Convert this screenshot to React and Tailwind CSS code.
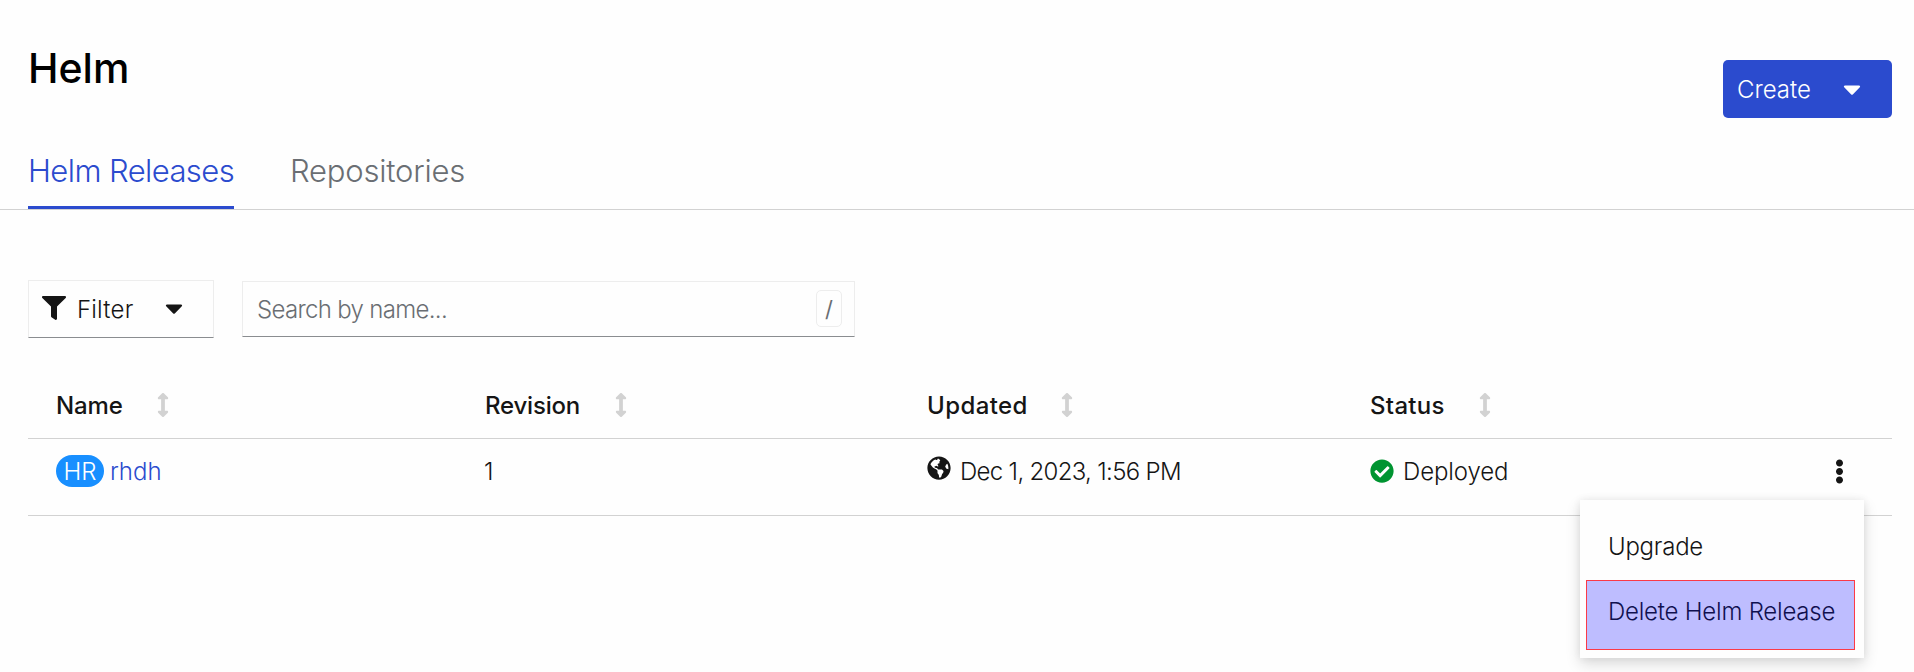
import React from "react";
import {
  FaArrowsAltV,
  FaCaretDown,
  FaCheckCircle,
  FaEllipsisV,
  FaFilter,
  FaGlobeAmericas,
} from "react-icons/fa";

const columns = [
  { label: "Name", cell: "w-[457px] pl-7", text: "tracking-[-0.1px]", gap: "ml-[28px]" },
  { label: "Revision", cell: "w-[442px]", text: "tracking-[-0.2px]", gap: "ml-[29px]" },
  { label: "Updated", cell: "w-[443px]", text: "tracking-[0.4px]", gap: "ml-[27px]" },
  { label: "Status", cell: "flex-1", text: "tracking-[0.3px]", gap: "ml-[28px]" },
];

function Tabs() {
  return (
    <nav className="mt-[33px] flex gap-14 border-b border-[#d2d2d2] px-7 text-[31px] leading-10">
      <a className="h-[58px] w-[206px] border-b-3 border-[#2b4bce] whitespace-nowrap tracking-[-0.58px] text-[#2b4bce]">
        Helm Releases
      </a>
      <a className="tracking-[-0.2px] text-[#6a6e73]">Repositories</a>
    </nav>
  );
}

function Toolbar() {
  return (
    <div className="mt-[70px] flex items-center gap-7 px-7">
      <button className="flex h-[58px] w-[186px] items-center border border-[#ededed] border-b-[#8a8d90] pl-[13px]">
        <FaFilter className="-mt-[2px] size-6" />
        <span className="ml-[11px] w-[83px] pt-0.5 text-left tracking-[0.2px]">Filter</span>
        <FaCaretDown className="-mt-[2px] size-7" />
      </button>
      <div className="flex h-[56px] w-[613px] items-center justify-between border border-[#ededed] border-b-[#8a8d90] pr-3 pl-[14px] text-[#6a6e73]">
        <span className="pt-0.5 tracking-[-0.68px]">Search by name...</span>
        <kbd className="-mt-px flex h-[37px] w-[26px] items-center justify-center rounded-[5px] border border-[#ededed] font-[Inter] text-[22px] font-normal">
          /
        </kbd>
      </div>
    </div>
  );
}

function ActionMenu() {
  return (
    <div className="absolute top-[61px] right-7 flex h-[158px] w-[284px] flex-col bg-[#fefefe] pt-[28px] leading-[38px] shadow-[0_6px_14px_rgba(3,3,3,0.14),0_0_8px_rgba(3,3,3,0.07)]">
      <div className="h-[52px] pl-7 tracking-[-0.25px]">Upgrade</div>
      <div className="ml-[6px] h-[70px] w-[269px] border border-[#fb3a47] bg-[#bebdff] pt-[12px] pl-[21px] tracking-[-0.22px] whitespace-nowrap text-[#10104f]">
        Delete Helm Release
      </div>
    </div>
  );
}

function ReleasesTable() {
  return (
    <div className="mt-[50px] mr-[22px] ml-7">
      <div className="flex h-[51px] border-b border-[#d2d2d2] font-medium">
        {columns.map((c) => (
          <div key={c.label} className={`flex h-[34px] items-center ${c.cell}`}>
            <span className={`pt-0.5 ${c.text}`}>{c.label}</span>
            <FaArrowsAltV className={`size-6 text-[#d2d2d2] ${c.gap}`} />
          </div>
        ))}
      </div>
      <div className="relative flex h-[77px] border-b border-[#d2d2d2] pt-[14px]">
        <div className="flex h-9 w-[457px] items-center pl-7">
          <span className="flex h-8 w-12 items-center justify-center rounded-full bg-[#188fff] pt-0.5 text-white">
            HR
          </span>
          <a className="ml-[6px] pt-0.5 text-[#2b4bce]">rhdh</a>
        </div>
        <div className="w-[442px] -ml-px leading-[38px]">1</div>
        <div className="ml-px flex h-9 w-[443px] items-center">
          <FaGlobeAmericas className="-mt-[6px] size-6" />
          <span className="ml-[9px] pt-0.5 tracking-[-0.68px]">Dec 1, 2023, 1:56 PM</span>
        </div>
        <div className="flex h-9 flex-1 items-center">
          <FaCheckCircle className="size-6 text-[#009431]" />
          <span className="ml-[9px] pt-0.5 tracking-[-0.1px]">Deployed</span>
        </div>
        <button className="mr-10 flex h-9 items-center">
          <FaEllipsisV className="size-[25px]" />
        </button>
        <ActionMenu />
      </div>
    </div>
  );
}

export default function App() {
  return (
    <main className="h-[672px] overflow-hidden bg-[#fefefe] font-[Inter,sans-serif] text-2xl leading-9 font-[320] text-[#151515]">
      <header className="flex h-[118px] items-start justify-between pr-[22px] pl-7">
        <h1 className="mt-[42px] text-[41px] leading-[52px] font-[450] text-black">Helm</h1>
        <button className="mt-[60px] flex h-[58px] w-[169px] items-center rounded-[5px] bg-[#2b4bce] pl-[14px] text-white">
          <span className="w-[101px] pt-0.5 text-left">Create</span>
          <FaCaretDown className="size-7" />
        </button>
      </header>
      <Tabs />
      <Toolbar />
      <ReleasesTable />
    </main>
  );
}
